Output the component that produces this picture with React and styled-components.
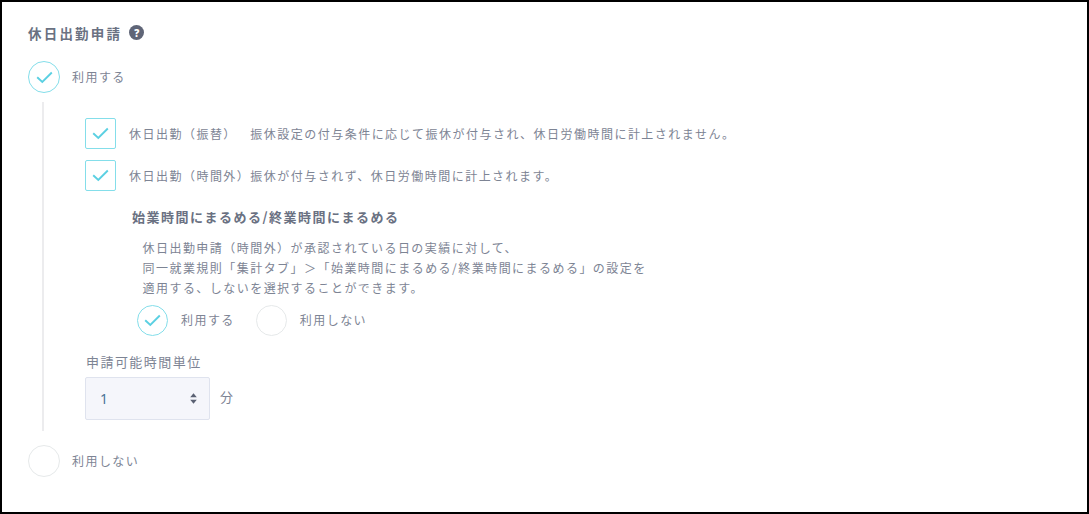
import React, { useState } from "react";
import styled, { createGlobalStyle } from "styled-components";

const UNITS = [1, 5, 10, 15, 30, 60];

// チェックマーク
function Check() {
  return (
    <svg width="17" height="13" viewBox="0 0 17 13" fill="none">
      <path d="M1.2 6.2 L6.3 11 L15.8 1.5" stroke="#5bd0e2" strokeWidth="1.9" />
    </svg>
  );
}

function Choice({ type = "radio", small, name, checked, onChange, children }) {
  const compact = type === "checkbox" || small;

  return (
    <StChoice $compact={compact}>
      <StHiddenInput
        type={type}
        name={name}
        checked={checked}
        onChange={onChange}
      />
      <StMark
        $compact={compact}
        $round={type === "radio"}
        $checked={checked}
      >
        {checked && <Check />}
      </StMark>
      <StChoiceText $box={type === "checkbox"}>{children}</StChoiceText>
    </StChoice>
  );
}

function App() {
  const [enabled, setEnabled] = useState(true);
  const [transfer, setTransfer] = useState(true);
  const [overtime, setOvertime] = useState(true);
  const [rounding, setRounding] = useState(true);
  const [unit, setUnit] = useState(1);

  return (
    <>
      <GlobalStyle />
      <StPanel>
        <StHeader>
          <StTitle>休日出勤申請</StTitle>
          <StHelp>?</StHelp>
        </StHeader>

        <Choice name="enabled" checked={enabled} onChange={() => setEnabled(true)}>
          利用する
        </Choice>

        <StDetail>
          <StChecks>
            <Choice
              type="checkbox"
              checked={transfer}
              onChange={() => setTransfer(!transfer)}
            >
              休日出勤（振替）　振休設定の付与条件に応じて振休が付与され、休日労働時間に計上されません。
            </Choice>
            <Choice
              type="checkbox"
              checked={overtime}
              onChange={() => setOvertime(!overtime)}
            >
              休日出勤（時間外）振休が付与されず、休日労働時間に計上されます。
            </Choice>
          </StChecks>

          <StSubTitle>始業時間にまるめる/終業時間にまるめる</StSubTitle>
          <StDescription>
            休日出勤申請（時間外）が承認されている日の実績に対して、
            <br />
            同一就業規則「集計タブ」＞「始業時間にまるめる/終業時間にまるめる」の設定を
            <br />
            適用する、しないを選択することができます。
          </StDescription>
          <StRadios>
            <Choice
              small
              name="rounding"
              checked={rounding}
              onChange={() => setRounding(true)}
            >
              利用する
            </Choice>
            <Choice
              small
              name="rounding"
              checked={!rounding}
              onChange={() => setRounding(false)}
            >
              利用しない
            </Choice>
          </StRadios>

          <StUnitLabel>申請可能時間単位</StUnitLabel>
          <StUnitRow>
            <StSelectBox>
              <StSelect value={unit} onChange={(e) => setUnit(e.target.value)}>
                {UNITS.map((u) => (
                  <option key={u} value={u}>
                    {u}
                  </option>
                ))}
              </StSelect>
              <svg width="7" height="11" viewBox="0 0 7 11" fill="#5a6173">
                <path d="M3.5 0.2 L6.8 4.3 H0.2 Z M3.5 10.8 L6.8 6.7 H0.2 Z" />
              </svg>
            </StSelectBox>
            <StUnit>分</StUnit>
          </StUnitRow>
        </StDetail>

        <Choice name="enabled" checked={!enabled} onChange={() => setEnabled(false)}>
          利用しない
        </Choice>
      </StPanel>
    </>
  );
}

const GlobalStyle = createGlobalStyle`
  * {
    box-sizing: border-box;
  }

  body {
    margin: 0;
    background-color: #fff;
    color: #7d8494;
    font-family: "Noto Sans CJK JP", sans-serif;
    font-size: 12px;
    /* 全角スペースと括弧の間を詰めない */
    text-spacing-trim: space-all;
  }
`;

const StPanel = styled.main`
  height: 514px;
  padding: 21px 26px 0;
  border: 2px solid #000;
`;

const StHeader = styled.div`
  display: flex;
  align-items: center;
  gap: 7px;

  height: 20px;
  margin-bottom: 18px;
`;

const StTitle = styled.h1`
  margin: 0;

  font-size: 13.5px;
  font-weight: bold;
  line-height: 20px;
  letter-spacing: 2.2px;
  color: #6a7182;
`;

const StHelp = styled.span`
  display: flex;
  align-items: center;
  justify-content: center;

  width: 15px;
  height: 15px;
  margin-bottom: 1px;
  border-radius: 50%;
  background-color: #5f6577;

  font-family: "Open Sans", sans-serif;
  font-size: 10px;
  font-weight: 800;
  line-height: 1;
  color: #fff;
`;

const StChoice = styled.label`
  display: flex;
  align-items: center;
  gap: ${({ $compact }) => ($compact ? "13px" : "12px")};

  cursor: pointer;
`;

const StHiddenInput = styled.input`
  position: absolute;
  opacity: 0;
  pointer-events: none;
`;

const StMark = styled.span`
  display: flex;
  align-items: center;
  justify-content: center;
  flex-shrink: 0;

  width: ${({ $compact }) => ($compact ? "31px" : "32px")};
  height: ${({ $compact }) => ($compact ? "31px" : "32px")};
  border: 1px solid ${({ $checked }) => ($checked ? "#84deea" : "#e6e9ea")};
  border-radius: ${({ $round }) => ($round ? "50%" : "2px")};
`;

const StChoiceText = styled.span`
  padding-bottom: ${({ $box }) => ($box ? 0 : "1px")};

  line-height: 20px;
  letter-spacing: ${({ $box }) => ($box ? "1.48px" : "1.45px")};
  white-space: nowrap;
`;

/* 左の縦線でつながる詳細設定 */
const StDetail = styled.section`
  height: 329px;
  margin: 9px 0 14px 14px;
  padding: 16px 0 0 41px;
  border-left: 2px solid #ececee;
`;

const StChecks = styled.div`
  display: flex;
  flex-direction: column;
  gap: 11px;
`;

const StSubTitle = styled.h2`
  margin: 16px 0 0 47px;

  font-size: 13px;
  font-weight: bold;
  line-height: 20px;
  letter-spacing: 1.5px;
  color: #6a7182;
`;

const StDescription = styled.p`
  margin: 11px 0 0 57.5px;

  line-height: 20px;
  letter-spacing: 1.46px;
`;

const StRadios = styled.div`
  display: flex;
  gap: 21px;

  margin: 7px 0 0 52px;
`;

const StUnitLabel = styled.div`
  margin: 16px 0 5px 1px;

  font-size: 13px;
  line-height: 20px;
  letter-spacing: 1.45px;
`;

const StUnitRow = styled.div`
  display: flex;
  align-items: center;
  gap: 10px;
`;

const StSelectBox = styled.div`
  display: flex;
  align-items: center;

  width: 125px;
  height: 43px;
  padding: 0 12px 0 14px;
  border: 1px solid #dfe3ee;
  border-radius: 2px;
  background-color: #f5f6fb;
`;

const StSelect = styled.select`
  flex: 1;
  appearance: none;

  padding: 0 0 1px;
  border: none;
  outline: none;
  background: transparent;

  font-family: "Noto Sans", sans-serif;
  font-size: 14px;
  color: #4b7396;
`;

const StUnit = styled.span`
  padding-bottom: 3px;

  font-size: 13px;
  line-height: 20px;
`;

export default App;
